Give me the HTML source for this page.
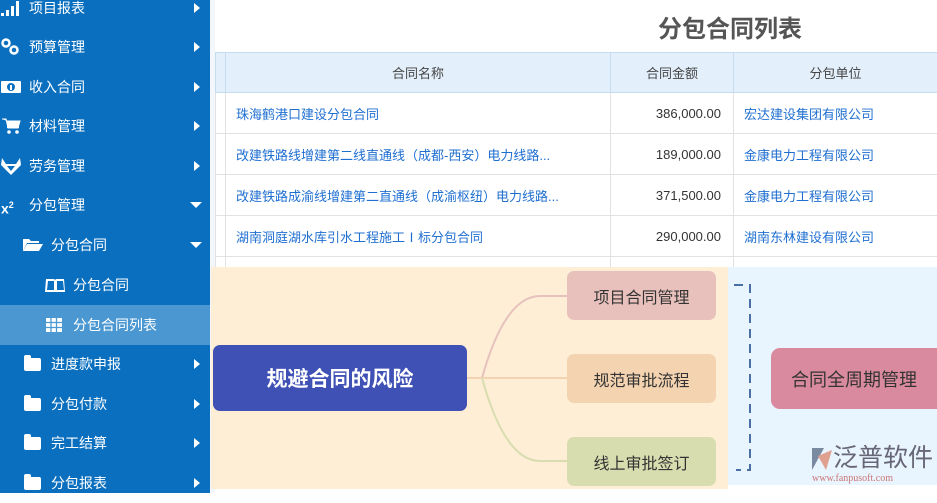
<!DOCTYPE html>
<html><head><meta charset="utf-8"><style>
*{margin:0;padding:0;box-sizing:border-box}
body{width:937px;height:493px;overflow:hidden;background:#fff;position:relative;font-family:"Liberation Sans","Noto Sans CJK SC",sans-serif}
.sb{position:absolute;left:0;top:0;width:210px;height:493px;background:#0a6fbf}
.it{position:absolute;left:0;width:210px;height:40px;color:#fff;font-size:14px;line-height:40px}
.it svg{position:absolute;top:11px}
.it .tx{position:absolute}
.it .ar{position:absolute;right:10px;top:15px;width:0;height:0;border-top:5px solid transparent;border-bottom:5px solid transparent;border-left:6px solid #fff}
.it .dn{position:absolute;right:8px;top:17px;width:0;height:0;border-left:6px solid transparent;border-right:6px solid transparent;border-top:6px solid #fff}
.fold{position:absolute;left:24px;top:14px;width:17px;height:13px;background:#fff;border-radius:2px}
.fold:before{content:"";position:absolute;left:0;top:-3px;width:7px;height:4px;background:#fff;border-radius:2px 2px 0 0}
.title{position:absolute;left:658px;top:9px;font-size:24px;font-weight:bold;color:#555}
table{position:absolute;left:215px;top:52px;border-collapse:collapse;font-size:13px;table-layout:fixed;width:722px}
td,th{border:1px solid #e2e2e2;height:41px;font-weight:normal;white-space:nowrap;overflow:hidden}
th{background:#e3effb;color:#444;border-color:#c6dcef;height:40px}
td{color:#1f6fd1}
.n{text-align:right;color:#333;padding-right:12px}
.ov{position:absolute}
.bx{position:absolute;border-radius:7px;display:flex;align-items:center;justify-content:center;color:#333;font-size:16px}
</style></head><body>
<div class="sb">
<div class="it" style="top:-12px"><svg style="left:1px" width="20" height="18"><rect x="0" y="14" width="3" height="3" fill="#fff"/><rect x="5" y="11" width="3" height="6" fill="#fff"/><rect x="10" y="7" width="3" height="10" fill="#fff"/><rect x="15" y="2" width="3" height="15" fill="#fff"/></svg><span class="tx" style="left:29px">项目报表</span><i class="ar"></i></div>
<div class="it" style="top:27px"><svg style="left:1px" width="20" height="18"><circle cx="5" cy="5" r="3.5" fill="none" stroke="#fff" stroke-width="2.5"/><circle cx="13" cy="12" r="3.5" fill="none" stroke="#fff" stroke-width="2.5"/></svg><span class="tx" style="left:29px">预算管理</span><i class="ar"></i></div>
<div class="it" style="top:67px"><svg style="left:1px" width="20" height="18"><rect x="0" y="3" width="20" height="12" rx="1" fill="#fff"/><circle cx="10" cy="9" r="4" fill="#0a6fbf"/><rect x="9" y="7" width="2" height="5" fill="#fff"/></svg><span class="tx" style="left:29px">收入合同</span><i class="ar"></i></div>
<div class="it" style="top:106px"><svg style="left:2px" width="20" height="18"><path d="M0 2h4l2 9h10l2-7H5" fill="#fff" stroke="#fff" stroke-width="1"/><rect x="5" y="4" width="12" height="7" fill="#fff"/><circle cx="7" cy="15" r="1.8" fill="#fff"/><circle cx="15" cy="15" r="1.8" fill="#fff"/></svg><span class="tx" style="left:29px">材料管理</span><i class="ar"></i></div>
<div class="it" style="top:146px"><svg style="left:1px" width="20" height="18"><path d="M1 1l4 6h10l4-6 1 7-10 10L0 8z" fill="#fff"/><path d="M6 9l4 5 4-5z" fill="#0a6fbf"/></svg><span class="tx" style="left:29px">劳务管理</span><i class="ar"></i></div>
<div class="it" style="top:185px"><span class="tx" style="left:1px;font-weight:bold;font-size:14px">x<sup style="font-size:9px">2</sup></span><span class="tx" style="left:29px">分包管理</span><i class="dn"></i></div>
<div class="it" style="top:225px"><svg style="left:23px;top:13px" width="20" height="14"><path d="M0 1h6l2 2h8v2H4L0 13z" fill="#fff"/><path d="M4 6h16l-4 7H0z" fill="#fff"/></svg><span class="tx" style="left:51px">分包合同</span><i class="dn"></i></div>
<div class="it" style="top:265px"><svg style="left:45px;top:13px" width="21" height="15"><path d="M1 1h8l1 1 1-1h8l1 13H0z" fill="#fff"/><path d="M3 3h6v9H2zM12 3h6l1 9h-7z" fill="#0a6fbf"/></svg><span class="tx" style="left:73px">分包合同</span></div>
<div class="it" style="top:305px;background:#4a97d2"><svg style="left:46px;top:13px" width="16" height="14"><rect width="16" height="14" fill="#fff"/><path d="M0 4.5h16M0 9.5h16M5 0v14M10.5 0v14" stroke="#4a97d2" stroke-width="1.3"/></svg><span class="tx" style="left:73px">分包合同列表</span></div>
<div class="it" style="top:344px"><i class="fold"></i><span class="tx" style="left:51px">进度款申报</span><i class="ar"></i></div>
<div class="it" style="top:384px"><i class="fold"></i><span class="tx" style="left:51px">分包付款</span><i class="ar"></i></div>
<div class="it" style="top:423px"><i class="fold"></i><span class="tx" style="left:51px">完工结算</span><i class="ar"></i></div>
<div class="it" style="top:463px"><i class="fold"></i><span class="tx" style="left:51px">分包报表</span><i class="ar"></i></div>
</div>
<div style="position:absolute;left:210px;top:0;width:5px;height:493px;background:#f3f7fc"></div>
<div class="title">分包合同列表</div>
<table>
<colgroup><col style="width:10px"><col style="width:385px"><col style="width:123px"><col style="width:204px"></colgroup>
<tr><th></th><th>合同名称</th><th>合同金额</th><th>分包单位</th></tr>
<tr><td></td><td style="padding-left:10px">珠海鹤港口建设分包合同</td><td class="n">386,000.00</td><td style="padding-left:10px">宏达建设集团有限公司</td></tr>
<tr><td></td><td style="padding-left:10px">改建铁路线增建第二线直通线（成都-西安）电力线路...</td><td class="n">189,000.00</td><td style="padding-left:10px">金康电力工程有限公司</td></tr>
<tr><td></td><td style="padding-left:10px">改建铁路成渝线增建第二直通线（成渝枢纽）电力线路...</td><td class="n">371,500.00</td><td style="padding-left:10px">金康电力工程有限公司</td></tr>
<tr><td></td><td style="padding-left:10px">湖南洞庭湖水库引水工程施工Ⅰ标分包合同</td><td class="n">290,000.00</td><td style="padding-left:10px">湖南东林建设有限公司</td></tr>
<tr><td></td><td></td><td></td><td></td></tr>
</table>
<div class="ov" style="left:211px;top:267px;width:517px;height:222px;background:#feeed5"></div>
<div class="ov" style="left:728px;top:267px;width:209px;height:218px;background:#e8f4fe"></div>
<svg class="ov" style="left:0;top:0" width="937" height="493">
<path d="M467 378 L482 378 Q505 296 540 296 L567 296" fill="none" stroke="#e6c1bd" stroke-width="2"/>
<path d="M467 378 L567 378" fill="none" stroke="#f3d3b0" stroke-width="2"/>
<path d="M482 378 Q505 461 540 461 L567 461" fill="none" stroke="#d8ddb0" stroke-width="2"/>
<path d="M734 285 L750 285 L750 470 L736 470" fill="none" stroke="#4a6fa5" stroke-width="2" stroke-dasharray="9,6"/>
<path d="M812 448 L824 448 L812 470 Z" fill="#7a8aa0"/><path d="M818 456 L832 450 L826 470 Z" fill="#e0a090"/>
</svg>
<div class="bx" style="left:213px;top:345px;width:254px;height:66px;background:#3f51b5;color:#fff;font-size:21px;font-weight:bold">规避合同的风险</div>
<div class="bx" style="left:567px;top:271px;width:149px;height:49px;background:#e8c1bd">项目合同管理</div>
<div class="bx" style="left:567px;top:354px;width:149px;height:49px;background:#f3d3b0">规范审批流程</div>
<div class="bx" style="left:567px;top:437px;width:149px;height:49px;background:#d8ddb0">线上审批签订</div>
<div class="bx" style="left:771px;top:348px;width:166px;height:61px;background:#d98a9e;font-size:18px;border-radius:9px 0 0 9px">合同全周期管理</div>
<div class="ov" style="left:833px;top:443px;font-size:25px;color:#667;line-height:30px">泛普软件</div>
<div class="ov" style="left:812px;top:473px;font-size:10px;color:#c77;font-family:'Liberation Serif',serif">www.fanpusoft.com</div>
</body></html>
